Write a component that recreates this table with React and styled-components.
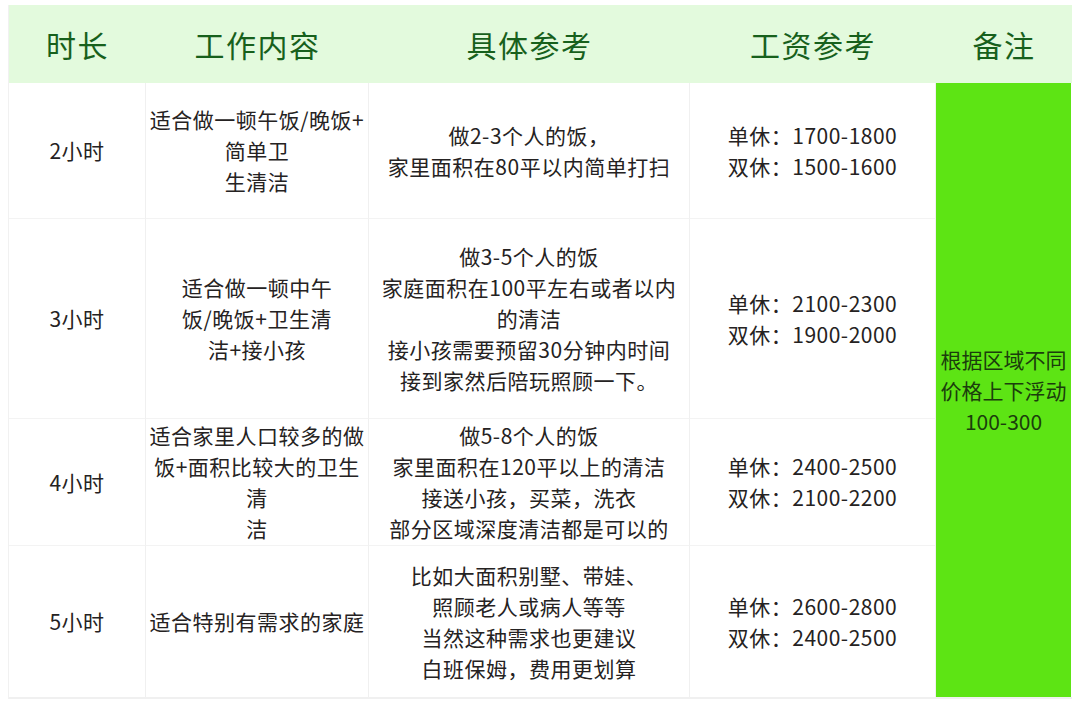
import React from 'react';
import styled, { createGlobalStyle } from 'styled-components';

const GlobalStyle = createGlobalStyle`
  html, body {
    margin: 0;
    padding: 0;
    background: #ffffff;
  }
  body {
    padding: 5px 8px 0 8px;
    font-family: "Noto Sans CJK SC", "Noto Sans", sans-serif;
  }
`;

const rows = [
  {
    time: '2小时',
    work: ['适合做一顿午饭/晚饭+', '简单卫', '生清洁'],
    detail: ['做2-3个人的饭，', '家里面积在80平以内简单打扫'],
    pay: ['单休：1700-1800', '双休：1500-1600'],
  },
  {
    time: '3小时',
    work: ['适合做一顿中午', '饭/晚饭+卫生清', '洁+接小孩'],
    detail: ['做3-5个人的饭', '家庭面积在100平左右或者以内', '的清洁', '接小孩需要预留30分钟内时间', '接到家然后陪玩照顾一下。'],
    pay: ['单休：2100-2300', '双休：1900-2000'],
  },
  {
    time: '4小时',
    work: ['适合家里人口较多的做', '饭+面积比较大的卫生', '清', '洁'],
    detail: ['做5-8个人的饭', '家里面积在120平以上的清洁', '接送小孩，买菜，洗衣', '部分区域深度清洁都是可以的'],
    pay: ['单休：2400-2500', '双休：2100-2200'],
  },
  {
    time: '5小时',
    work: ['适合特别有需求的家庭'],
    detail: ['比如大面积别墅、带娃、', '照顾老人或病人等等', '当然这种需求也更建议', '白班保姆，费用更划算'],
    pay: ['单休：2600-2800', '双休：2400-2500'],
  },
];

const Table = styled.div`
  display: grid;
  width: 1063px;
  grid-template-columns: 137px 223px 321px 246px 136px;
  grid-template-rows: 78px 135px 200px 127px 152px;
  border-left: 1px solid #f1f1f1;
  border-bottom: 2px solid #f0f0f0;
`;

const HeadCell = styled.div`
  display: flex;
  align-items: center;
  justify-content: center;
  background: #e3fadd;
  color: #17601c;
  font-size: 30px;
  letter-spacing: 1.5px;
`;

const Cell = styled.div`
  display: flex;
  flex-direction: column;
  align-items: center;
  justify-content: center;
  text-align: center;
  color: #252222;
  font-size: 21px;
  line-height: 31px;
  letter-spacing: 0.5px;
  white-space: nowrap;
  border-right: 1px solid #f0f0f0;
  border-top: ${p => (p.$first ? 'none' : '1px solid #f3f3f3')};
`;

const NoteCell = styled.div`
  grid-column: 5;
  grid-row: 2 / span 4;
  display: flex;
  flex-direction: column;
  align-items: center;
  justify-content: center;
  background: #5de414;
  color: #1b3d0c;
  font-size: 21px;
  line-height: 31px;
  text-align: center;
  margin-right: 1px;
  white-space: nowrap;
`;

const Lines = ({ items }) => items.map((t, i) => <span key={i}>{t}</span>);

export default function App() {
  const heads = ['时长', '工作内容', '具体参考', '工资参考', '备注'];
  return (
    <>
      <GlobalStyle />
      <Table>
        {heads.map(h => (
          <HeadCell key={h}>{h}</HeadCell>
        ))}
        {rows.map((r, i) => (
          <React.Fragment key={r.time}>
            <Cell $first={i === 0}>{r.time}</Cell>
            <Cell $first={i === 0}><Lines items={r.work} /></Cell>
            <Cell $first={i === 0}><Lines items={r.detail} /></Cell>
            <Cell $first={i === 0}><Lines items={r.pay} /></Cell>
          </React.Fragment>
        ))}
        <NoteCell>
          <span>根据区域不同</span>
          <span>价格上下浮动</span>
          <span>100-300</span>
        </NoteCell>
      </Table>
    </>
  );
}
